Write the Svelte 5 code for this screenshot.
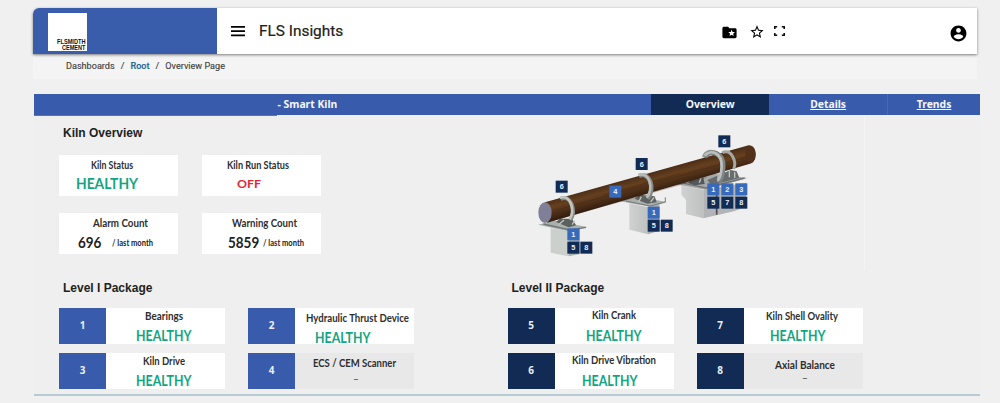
<script lang="ts">
  type Item = { no: number; label: string; x: number; y: number; w: number; vx: number; vy: number; off?: boolean };

  const stats = [
    { label: 'Kiln Status', x: 32, y: 4, w: 42, value: 'HEALTHY', kind: 'ok', vx: 17, vy: 19 },
    { label: 'Kiln Run Status', x: 25, y: 4, w: 62, value: 'OFF', kind: 'bad', vx: 35, vy: 20 },
    { label: 'Alarm Count', x: 34, y: 4, w: 55, value: '696', kind: 'count', vx: 19, vy: 20, unit: 53 },
    { label: 'Warning Count', x: 30, y: 4, w: 65, value: '5859', kind: 'count', vx: 26, vy: 20, unit: 61 }
  ];

  const packages: { title: string; dark: boolean; items: Item[] }[] = [
    {
      title: 'Level I Package',
      dark: false,
      items: [
        { no: 1, label: 'Bearings', x: 39, y: 2, w: 38, vx: 30, vy: 18 },
        { no: 2, label: 'Hydraulic Thrust Device', x: 11, y: 4, w: 103, vx: 20, vy: 20 },
        { no: 3, label: 'Kiln Drive', x: 37, y: 2, w: 42, vx: 30, vy: 18 },
        { no: 4, label: 'ECS / CEM Scanner', x: 18, y: 4, w: 83, vx: 58, vy: 18, off: true }
      ]
    },
    {
      title: 'Level II Package',
      dark: true,
      items: [
        { no: 5, label: 'Kiln Crank', x: 37, y: 1, w: 44, vx: 31, vy: 18 },
        { no: 7, label: 'Kiln Shell Ovality', x: 22, y: 2, w: 72, vx: 26, vy: 18 },
        { no: 6, label: 'Kiln Drive Vibration', x: 17, y: 1, w: 84, vx: 27, vy: 18 },
        { no: 8, label: 'Axial Balance', x: 31, y: 6, w: 60, vx: 58, vy: 17, off: true }
      ]
    }
  ];

  // marker centres on the kiln drawing
  const markers = [
    { n: 6, x: 125, y: 200, dark: true },
    { n: 6, x: 365, y: 132, dark: true },
    { n: 6, x: 613, y: 64, dark: true },
    { n: 4, x: 286, y: 215 },
    { n: 1, x: 160, y: 343 },
    { n: 5, x: 160, y: 383, dark: true },
    { n: 8, x: 199, y: 383, dark: true },
    { n: 1, x: 401, y: 278 },
    { n: 5, x: 401, y: 317, dark: true },
    { n: 8, x: 440, y: 317, dark: true },
    { n: 1, x: 580, y: 208 },
    { n: 2, x: 622, y: 208 },
    { n: 3, x: 664, y: 208 },
    { n: 5, x: 580, y: 248, dark: true },
    { n: 7, x: 622, y: 248, dark: true },
    { n: 8, x: 664, y: 248, dark: true }
  ];
</script>

<div class="page">
  <header class="topbar">
    <div class="brand">
      <svg class="logo" width="39" height="38">
        <text x="9" y="30.5" textLength="28.5" lengthAdjust="spacingAndGlyphs">FLSMIDTH</text>
        <text x="14" y="37" textLength="23.5" lengthAdjust="spacingAndGlyphs">CEMENT</text>
      </svg>
    </div>
    <svg class="menu" viewBox="0 0 14 12"><path d="M0 1h14v1.8H0zM0 5.2h14V7H0zM0 9.400h14v1.800H0z" /></svg>
    <h1>FLS Insights</h1>
    <div class="tools">
      <svg width="17" height="17" viewBox="0 0 24 24"><path d="M20 6h-8l-2-2H4c-1.1 0-2 .9-2 2v12c0 1.1.9 2 2 2h16c1.1 0 2-.9 2-2V8c0-1.1-.9-2-2-2zm-2.06 11L15 15.28 12.06 17l.78-3.33-2.59-2.24 3.41-.29L15 8l1.34 3.14 3.41.29-2.59 2.24.78 3.33z" /></svg>
      <svg class="star" width="16" height="16" viewBox="0 0 24 24"><path d="M22 9.24l-7.19-.62L12 2 9.19 8.63 2 9.24l5.46 4.73L5.82 21 12 17.27 18.18 21l-1.63-7.03L22 9.24zM12 15.4l-3.76 2.27 1-4.28-3.32-2.88 4.38-.38L12 6.1l1.71 4.04 4.38.38-3.32 2.88 1 4.28L12 15.4z" /></svg>
      <svg class="full" width="11" height="10" viewBox="0 0 11 10"><path d="M.8 3V.8h2.4M7.8.8h2.4V3M10.2 7v2.2H7.8M3.2 9.2H.8V7" /></svg>
    </div>
    <svg class="user" width="19" height="19" viewBox="0 0 24 24"><path d="M12 2C6.48 2 2 6.48 2 12s4.48 10 10 10 10-4.48 10-10S17.52 2 12 2zm0 3c1.66 0 3 1.34 3 3s-1.34 3-3 3-3-1.34-3-3 1.34-3 3-3zm0 14.2c-2.5 0-4.71-1.28-6-3.22.03-1.99 4-3.08 6-3.08 1.99 0 5.97 1.09 6 3.08-1.29 1.94-3.5 3.22-6 3.22z" /></svg>
  </header>

  <nav class="crumbs">
    <span>Dashboards</span><i>/</i><b>Root</b><i>/</i><span>Overview Page</span>
  </nav>

  <nav class="tabs">
    <div class="name">- Smart Kiln</div>
    <div class="tab active">Overview</div>
    <div class="tab"><u>Details</u></div>
    <div class="tab last"><u>Trends</u></div>
  </nav>

  <main>
    <div class="top">
      <section>
        <h2>Kiln Overview</h2>
        <div class="stats">
          {#each stats as s (s.label)}
            <div class="stat">
              <svg class="text" width="119" height="41">
                <text x={s.x} y={s.y + 9.5} class="label" textLength={s.w} lengthAdjust="spacingAndGlyphs">{s.label}</text>
                {#if s.kind === 'ok'}
                  <text x={s.vx} y={s.vy + 15} class="ok" textLength="62" lengthAdjust="spacingAndGlyphs">{s.value}</text>
                {:else if s.kind === 'bad'}
                  <text x={s.vx} y={s.vy + 12.5} class="bad" textLength="24" lengthAdjust="spacingAndGlyphs">{s.value}</text>
                {:else}
                  <text x={s.vx} y={s.vy + 15} class="count" textLength={s.value.length * 7.8} lengthAdjust="spacingAndGlyphs">{s.value}</text>
                  <text x={s.unit} y={s.vy + 13} class="unit" textLength="41" lengthAdjust="spacingAndGlyphs">/ last month</text>
                {/if}
              </svg>
            </div>
          {/each}
        </div>
      </section>

      <svg class="kiln" width="260" height="145" viewBox="0 0 780 435">
        <defs>
          <linearGradient id="shell" gradientUnits="userSpaceOnUse" x1="370" y1="165" x2="385" y2="220">
            <stop offset="0" stop-color="#4c2e17" />
            <stop offset="0.35" stop-color="#66401f" />
            <stop offset="1" stop-color="#372010" />
          </linearGradient>
          <linearGradient id="block" x1="0" y1="0" x2="1" y2="0">
            <stop offset="0" stop-color="#d0d2d1" />
            <stop offset="1" stop-color="#bfc1c1" />
          </linearGradient>
        </defs>

        <!-- piers -->
        <path d="M92 324l54 10v75l-54-11z" fill="#cbd0cd" />
        <path d="M146 334l34-8v76l-34 7z" fill="#a9afac" />
        <path d="M328 250l56 12v81l-56-14z" fill="url(#block)" />
        <path d="M384 262l34-10v80l-34 11z" fill="#aaacad" />
        <path d="M484 196l66 14v85l-52-13v-42l-14-16z" fill="url(#block)" />
        <path d="M550 210l128-22v72l-36 14-92 21z" fill="#b2b4b5" />
        <path d="M590 200v84" stroke="#4b4d50" stroke-width="5" />

        <!-- decks -->
        <path d="M54 314l50-12 98 19-50 14z" fill="#a9b0ae" />
        <path d="M70 312l80 18 48-8" fill="none" stroke="#737977" stroke-width="4" />
        <path d="M300 244l54-14 86 16-46 15z" fill="#aaaead" />
        <path d="M318 243l72 15 46-12v-14" fill="none" stroke="#777b7a" stroke-width="3" />
        <path d="M464 192l112-32 106 14-124 36z" fill="#a5a9a9" />
        <path d="M482 188l76 16 116-30" fill="none" stroke="#707475" stroke-width="4" />
        <path d="M108 306l12-10h36l12 20-22 6z" fill="#59605e" />
        <path d="M344 236l14-12 46 5 6 18-28 4z" fill="#5e6362" />
        <path d="M488 184l20-15 42 3 4 20-30 4z" fill="#55595a" />
        <path d="M562 180l70-30 18 4 8 20-84 22z" fill="#686c6e" />
        <path d="M116 314l16-14m24 14l8-12M356 246l8-16m28 16l10-14M502 188l12-16m24 16l6-18M594 186v-30m34 16v-24m16 26v-18" stroke="#c1c5c4" stroke-width="4" />

        <!-- rear ring, shell, front rings -->
        <path d="M551 112C556 84 602 88 607 135" fill="none" stroke="#9da1a0" stroke-width="10" />
        <path d="M75 247L686 76C714 76 714 128 690 131L82 308z" fill="url(#shell)" />
        <path d="M110 270L680 111M160 284L560 172M250 225L480 161" stroke="#2c190d" stroke-opacity="0.25" stroke-width="3" />
        <ellipse cx="691" cy="103" rx="15" ry="26" fill="#52301a" />
        <ellipse cx="75" cy="278" rx="20" ry="31" fill="#7f7f98" />
        <path d="M122 237C153 221 169 272 151 300" fill="none" stroke="#858987" stroke-width="12" />
        <path d="M120 234C151 221 166 270 149 298" fill="none" stroke="#c1c6c1" stroke-width="8" />
        <path d="M357 168C390 153 407 209 383 236" fill="none" stroke="#858987" stroke-width="13" />
        <path d="M355 165C388 152 403 207 380 233" fill="none" stroke="#b9bdb9" stroke-width="8" />
        <path d="M555 110C572 87 612 98 609 142c-1 22-7 38-14 44" fill="none" stroke="#7e8281" stroke-width="15" />
        <path d="M554 107C571 86 607 98 605 140c-1 20-6 36-12 42" fill="none" stroke="#bbbfbd" stroke-width="8" />
        <path d="M607 98c27-12 44 26 34 49" fill="none" stroke="#a4a8a5" stroke-width="9" />

        {#each markers as m}
          <rect x={m.x - 18} y={m.y - 18} width="36" height="36" fill={m.dark ? '#112b55' : '#386abb'} />
          <text x={m.x} y={m.y + 8} class="marker">{m.n}</text>
        {/each}
      </svg>
    </div>

    <div class="packages">
      {#each packages as p (p.title)}
        <section>
          <h2>{p.title}</h2>
          <div class="items">
            {#each p.items as item (item.no)}
              <div class="item" class:off={item.off}>
                <div class="no" class:dark={p.dark}>{item.no}</div>
                <svg class="text" width="119" height="36">
                  <text x={item.x} y={item.y + 9.5} class="label" textLength={item.w} lengthAdjust="spacingAndGlyphs">{item.label}</text>
                  {#if item.off}
                    <text x={item.vx} y={item.vy + 11} class="dash">–</text>
                  {:else}
                    <text x={item.vx} y={item.vy + 15} class="ok" textLength="55.5" lengthAdjust="spacingAndGlyphs">HEALTHY</text>
                  {/if}
                </svg>
              </div>
            {/each}
          </div>
        </section>
      {/each}
    </div>
  </main>
</div>

<style>
  :global(body) {
    background: #f0f0f0;
  }

  .page {
    box-sizing: border-box;
    width: 1000px;
    height: 403px;
    padding: 8px 20px 0 33px;
    overflow: hidden;
    font-family: Roboto, sans-serif;
    color: #222;
  }

  .topbar {
    display: flex;
    align-items: center;
    width: 944px;
    height: 46px;
    background: #fff;
    border-radius: 6px 0 0 0;
    box-shadow: 0 1px 3px rgba(0, 0, 0, 0.5);
    position: relative;
  }

  .brand {
    box-sizing: border-box;
    width: 184px;
    height: 46px;
    padding: 5px 15px;
    background: #395dab;
    border-radius: 6px 0 0 0;
  }

  .logo {
    display: block;
    background: #fff;
    font: 700 6.8px "Liberation Sans", sans-serif;
    fill: #111;
  }

  .menu {
    width: 14px;
    height: 12px;
    margin: 0 14px 1px;
  }

  h1 {
    width: 462px;
    margin: 0;
    font-size: 15.4px;
    font-weight: 400;
    -webkit-text-stroke: 0.2px #222;
  }

  .tools {
    display: flex;
    align-items: center;
    margin-top: 2px;
  }

  .star {
    margin-left: 11px;
  }

  .full {
    margin: -3px 0 0 9px;
    fill: none;
    stroke: #111;
    stroke-width: 1.6;
  }

  .user {
    margin: 5px 9px 0 auto;
  }

  .crumbs {
    display: flex;
    align-items: center;
    box-sizing: border-box;
    width: 944px;
    height: 25px;
    padding: 0 0 2px 33px;
    background: #f4f4f4;
    font-size: 9.1px;
    color: #444;
    -webkit-text-stroke: 0.15px #444;
  }

  .crumbs i {
    margin: 0 6px;
    font-style: normal;
  }

  .crumbs b {
    font-weight: 500;
    color: #1c6596;
    -webkit-text-stroke-color: #1c6596;
  }

  .tabs {
    display: flex;
    width: 946px;
    height: 21px;
    margin: 15px 0 0 1px;
    background: #395bab;
    font: 700 10.4px/20px "Noto Sans", sans-serif;
    color: #f4f7ff;
  }

  .name {
    box-sizing: border-box;
    width: 617.5px;
    padding-left: 243.5px;
  }

  .tab {
    width: 118px;
    text-align: center;
  }

  .tab.active {
    background: #112b55;
  }

  .tab.last {
    box-sizing: border-box;
    width: 93px;
    border-left: 1px solid #4a69b4;
  }

  main {
    box-sizing: border-box;
    width: 946px;
    height: 281px;
    margin-left: 1px;
    padding-left: 25px;
    background: #efefef;
    border-bottom: 2px solid #b7cbd5;
  }

  main::before {
    content: '';
    display: block;
    width: 243px;
    height: 1px;
    margin: 0 0 -1px -25px;
    background: #5a72b8;
  }

  h2 {
    margin: 0 0 0 4px;
    font: 700 12px/14px "Liberation Sans", sans-serif;
    color: #222;
  }

  .top {
    display: flex;
    box-sizing: border-box;
    width: 806px;
    height: 155px;
    border-right: 1px solid #f4f4f4;
  }

  .top section {
    width: 461px;
    padding-top: 11px;
    box-sizing: border-box;
  }

  .kiln {
    margin-top: 5px;
  }

  .stats {
    display: grid;
    grid-template-columns: 119px 119px;
    gap: 17px 23.5px;
    margin-top: 15px;
  }

  .stat {
    height: 41px;
    background: #fff;
  }

  .text {
    display: block;
    overflow: visible;
    font-family: Lato, sans-serif;
  }

  .label {
    font-size: 10.8px;
    font-weight: 700;
    fill: #2e2e2e;
  }

  .dash {
    font-size: 10px;
    fill: #2e2e2e;
  }

  .ok {
    font-size: 15px;
    font-weight: 700;
    fill: #12a581;
  }

  .bad {
    font-size: 11.8px;
    font-weight: 700;
    fill: #e32636;
  }

  .count {
    font-size: 15px;
    font-weight: 700;
    fill: #222;
  }

  .unit {
    font-size: 8.8px;
    font-weight: 700;
    fill: #222;
  }

  .marker {
    font: 700 22px "Liberation Sans", sans-serif;
    text-anchor: middle;
    fill: #e9effa;
  }

  .packages {
    display: flex;
    gap: 93.5px;
    padding-top: 11px;
  }

  .items {
    display: grid;
    grid-template-columns: 166px 166px;
    gap: 8.5px 23px;
    margin-top: 13px;
  }

  .item {
    display: flex;
    height: 36px;
    background: #fff;
  }

  .item.off {
    background: #e8e8e8;
  }

  .no {
    flex: none;
    width: 47px;
    background: #395bab;
    font: 700 10px/35px "Noto Sans", sans-serif;
    text-align: center;
    color: #e9effa;
  }

  .no.dark {
    background: #112b55;
  }
</style>
